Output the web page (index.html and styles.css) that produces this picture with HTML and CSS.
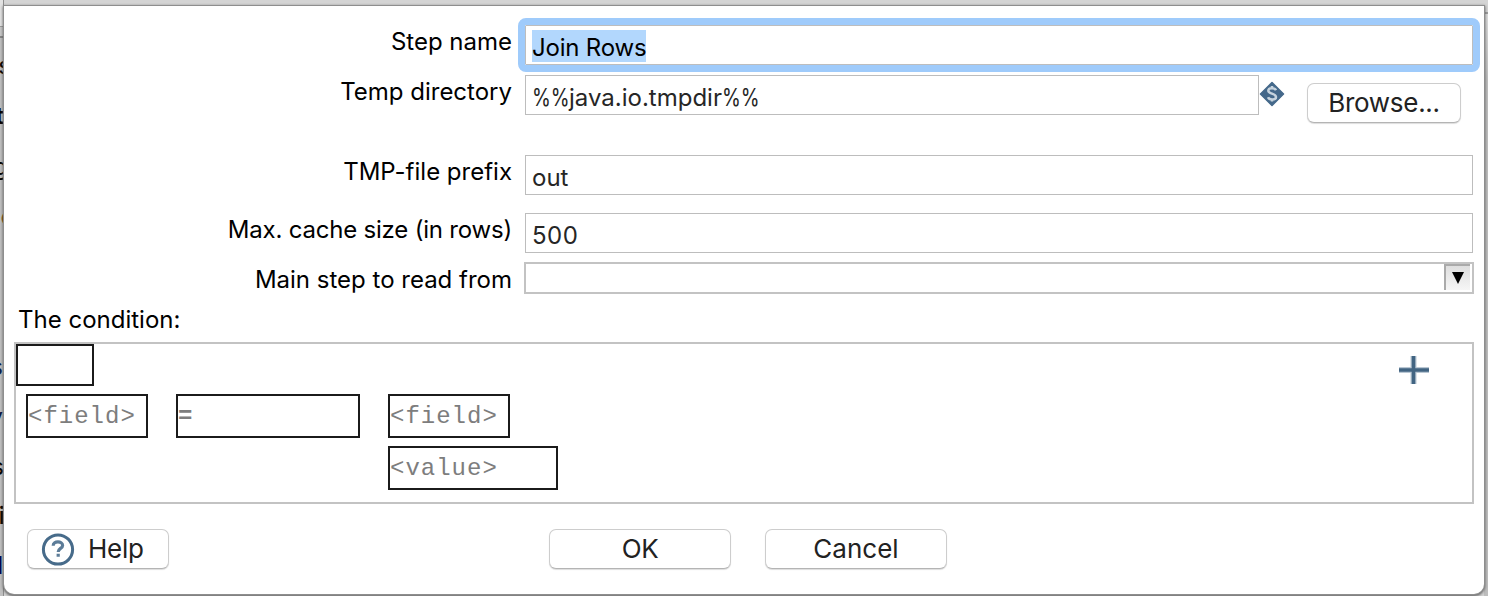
FILE: index.html
```html
<!DOCTYPE html>
<html lang="en">
<head>
<meta charset="utf-8">
<title>Join Rows</title>
<link rel="stylesheet" href="styles.css">
</head>
<body>
<div class="backdrop">
  <div class="edge">
    <span class="bit b1">s</span>
    <span class="bit b2">t</span>
    <span class="bit b3">g</span>
    <span class="bit b4">o</span>
    <span class="bit b5">s</span>
    <span class="bit b6">y</span>
    <span class="bit b7">s</span>
    <span class="bit b8">i</span>
    <span class="bit b9">l</span>
  </div>
  <div class="edge-right"></div>
  <main class="dialog">
    <div class="row r-step">
      <label class="label">Step name</label>
      <div class="input focused"><span class="value selected">Join Rows</span></div>
    </div>
    <div class="row r-temp">
      <label class="label">Temp directory</label>
      <div class="input short"><span class="value path"><span class="pct">%%</span>java.io.tmpdir<span class="pct">%%</span></span></div>
      <svg class="var-icon" width="26" height="26" viewBox="0 0 26 26"><path d="M13 1.5 24.5 13 13 24.5 1.5 13Z" fill="#44688a" stroke="#44688a" stroke-width="1.5" stroke-linejoin="round"/><path d="M17 9.2C15.7 6.6 9.4 6.4 9.3 9.8C9.3 13 17 12.3 17 15.9C17 19.3 10.3 19.3 9 16.3M13 5V7.4M13 18.2V20.6" fill="none" stroke="#c6d3de" stroke-width="2.5"/></svg>
      <button class="btn browse"><span>Browse...</span></button>
    </div>
    <div class="row r-prefix">
      <label class="label">TMP-file prefix</label>
      <div class="input"><span class="value">out</span></div>
    </div>
    <div class="row r-cache">
      <label class="label tight">Max. cache size (in rows)</label>
      <div class="input"><span class="value num">500</span></div>
    </div>
    <div class="row r-main">
      <label class="label">Main step to read from</label>
      <div class="combo"><div class="combo-btn"><svg width="12" height="12" viewBox="0 0 12 12"><path d="M0 0H12L6 12Z"/></svg></div></div>
    </div>
    <div class="cond-title">The condition:</div>
    <section class="condition">
      <div class="cell negate"></div>
      <div class="cells">
        <div class="cell field">&lt;field&gt;</div>
        <div class="cell operator">=</div>
        <div class="right-side">
          <div class="cell field">&lt;field&gt;</div>
          <div class="cell val">&lt;value&gt;</div>
        </div>
      </div>
      <svg class="plus" width="32" height="30" viewBox="0 0 32 30"><path d="M1 15H31M15.5 1V29" stroke="#b9c7d3" stroke-width="6"/><path d="M1 15H31M15.5 1V29" stroke="#416482" stroke-width="3.6"/></svg>
    </section>
    <div class="actions">
      <button class="btn help"><svg width="34" height="34" viewBox="0 0 34 34"><circle cx="17" cy="17.5" r="14.6" fill="none" stroke="#476b8a" stroke-width="3"/><path d="M12.2 13.8C12.2 8.6 21.6 8.8 21.6 13.4C21.6 16.6 17.2 16.3 17.2 20M17.2 21.8V24.8" fill="none" stroke="#5c7c98" stroke-width="3.2"/></svg><span>Help</span></button>
      <button class="btn ok"><span>OK</span></button>
      <button class="btn cancel"><span>Cancel</span></button>
    </div>
  </main>
</div>
</body>
</html>
```
FILE: styles.css
```css
* { box-sizing: border-box; }
body { margin: 0; width: 1488px; height: 596px; overflow: hidden; font-family: Inter, "Liberation Sans", sans-serif; }
.backdrop { position: relative; width: 1488px; height: 596px; padding: 6px 4px 2px; background: #d4d4d4; overflow: hidden; }
.edge { position: absolute; left: 0; top: 0; width: 4px; height: 596px; overflow: hidden;
  background: linear-gradient(#e2e2e2 0 26px, #999 26px 27px, #c8c8c8 27px 36px, #848484 36px 38px, #c0c0c0 38px); box-shadow: inset -1px 0 #8e8e8e; }
.edge-right { position: absolute; right: 0; top: 0; width: 4px; height: 596px;
  background: linear-gradient(#d4d4d4 0 12px, #9b9b9b 12px 14px, #dcdcdc 14px, #bebebe 80px); }
.bit { position: absolute; right: 0; font-size: 24px; line-height: 30px; color: #000; }
.b1 { top: 51px; right: -7px; }
.b2 { top: 101px; right: 0; font-weight: 600; }
.b3 { top: 152px; right: -4px; }
.b4 { top: 202px; right: -11px; color: #7c4a08; }
.b5 { top: 352px; right: 1px; color: #0a1a48; }
.b6 { top: 402px; right: 1px; color: #071440; }
.b7 { top: 452px; right: 0; }
.b8 { top: 501px; right: -1px; font-weight: 600; }
.b9 { top: 551px; right: 1px; font-weight: 600; color: #000050; }
.dialog { position: relative; height: 588px; background: #fff; border-radius: 0 0 10px 10px; padding: 19px 11px 0 10px;
  box-shadow: 0 0 0 1px #8e8e8e, 0 1px 3px 1px #555; display: flex; flex-direction: column; }
.row { display: flex; height: 40px; flex: none; }
.label { width: 498px; margin-right: 13px; text-align: right; font-size: 24px; line-height: 34px; white-space: nowrap; color: #000; }
.tight { letter-spacing: -.2px; }
.input { flex: 1; height: 40px; border: 1px solid #bdbdbd; background: #fff; padding: 4px 6px; font-size: 24px; color: #262626; }
.focused { outline: 7px solid #9fcbfb; border-radius: 1px; }
.value { display: inline-block; height: 32px; line-height: 36px; white-space: nowrap; }
.selected { background: #b2d7fd; color: #000; letter-spacing: -.2px; }
.num { letter-spacing: .5px; }
.pct { display: inline-block; width: 37px; transform: scaleX(.8); transform-origin: 0 0; }
.r-temp { margin-top: 10px; }
.short { flex: none; width: 734px; }
.var-icon { margin: 6px 0 0; }
.r-prefix { margin-top: 40px; }
.r-cache { margin-top: 18px; }
.r-main { margin-top: 9px; height: 32px; }
.r-main .label { margin-right: 12px; line-height: 36px; }
.combo { flex: none; width: 950px; height: 32px; border: 2px solid #c3c3c3; display: flex; justify-content: flex-end; padding-right: 2px; margin-right: -1px; }
.combo-btn { width: 26px; height: 26px; border: solid #aaa; border-width: 2px 0 0 2px; background: linear-gradient(#dedede, #f6f6f6); display: flex; justify-content: center; padding: 6px 0 0 0; }
.cond-title { height: 48px; padding-left: 4px; line-height: 52px; font-size: 24px; }
.condition { position: relative; width: 1460px; height: 162px; border: 2px solid #c3c3c3; flex: none; }
.cell { border: 2px solid #1b1b1b; height: 44px; font: 24px/41px "Liberation Mono", monospace; letter-spacing: 1px; color: #7d7d7d; white-space: nowrap; }
.negate { width: 78px; height: 42px; }
.cells { display: flex; gap: 28px; padding: 8px 0 0 10px; }
.field { width: 122px; }
.operator { width: 184px; font-weight: bold; }
.right-side { display: flex; flex-direction: column; gap: 8px; }
.val { width: 170px; }
.plus { position: absolute; left: 1382px; top: 11px; }
.btn { border: 1px solid #cdcdcd; border-bottom-color: #b4b4b4; border-radius: 7px; background: #fff; height: 40px; padding: 0; font: 26px/38px Inter, sans-serif; letter-spacing: -.3px; color: #222; box-shadow: 0 1px 1px #ddd; display: flex; align-items: center; justify-content: center; white-space: nowrap; }
.browse { width: 154px; margin: 8px 0 0 22px; }
.actions { display: flex; margin: 25px 0 0 13px; }
.help { width: 142px; justify-content: flex-start; padding-left: 13px; gap: 13px; }
.ok { width: 182px; margin-left: 380px; }
.cancel { width: 182px; margin-left: 34px; letter-spacing: 0; }
```
